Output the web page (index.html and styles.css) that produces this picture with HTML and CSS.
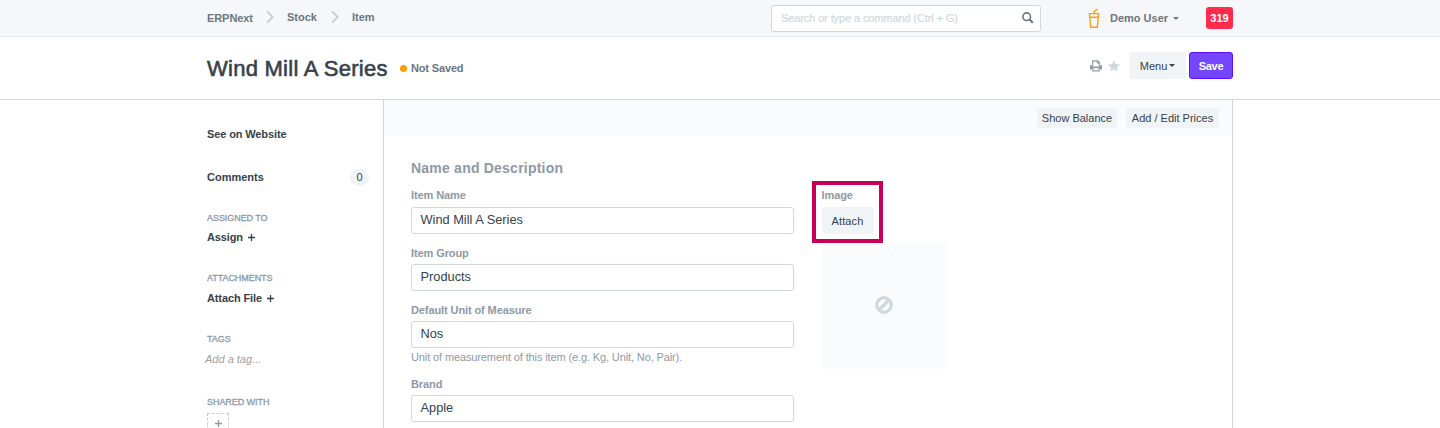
FILE: index.html
```html
<!DOCTYPE html>
<html lang="en">
<head>
<meta charset="utf-8">
<title>Wind Mill A Series</title>
<link rel="stylesheet" href="styles.css">
</head>
<body>
<header class="navbar">
  <div class="container navbar-row">
    <nav class="breadcrumbs">
      <a class="crumb crumb-home">ERPNext</a>
      <svg class="chevron" viewBox="0 0 8 14"><path d="M1.2 1.3 6.6 7l-5.4 5.7"/></svg>
      <a class="crumb crumb-stock">Stock</a>
      <svg class="chevron" viewBox="0 0 8 14"><path d="M1.2 1.3 6.6 7l-5.4 5.7"/></svg>
      <a class="crumb crumb-item">Item</a>
    </nav>
    <div class="search">
      <span class="search-text">Search or type a command (Ctrl + G)</span>
      <svg class="search-icon" viewBox="0 0 12 12"><circle cx="4.7" cy="4.7" r="3.8"/><path d="m7.6 7.6 3.2 3.2" class="handle"/></svg>
    </div>
    <div class="user">
      <svg class="avatar" viewBox="0 0 12 21"><path d="M.8 5.6h10.4M1.4 5.6l1.3 13.6h6.6l1.3-13.6M2 9.2h8M6 5.5V3.4L9.8 1.2"/></svg>
      <span class="user-name">Demo User</span>
      <span class="caret caret-light"></span>
    </div>
    <span class="count">319</span>
  </div>
</header>
<div class="page-head">
  <div class="container head-row">
    <h1 class="title">Wind Mill A Series</h1>
    <span class="dot"></span>
    <span class="status">Not Saved</span>
    <div class="actions">
      <svg class="print" viewBox="0 0 12 12"><path class="outline" d="M2.7 6V.9h5L9.3 2.5V6M7.4 1v1.9h1.8"/><path d="M1.2 5h1v1.5h7.6V5h1Q12 5 12 6.2v3.3H9.8V8.3H2.2v1.2H0V6.2Q0 5 1.2 5"/><path class="outline" d="M2.7 8v2.9h6.6V8"/></svg>
      <svg class="star" viewBox="0 0 12 12"><path d="m6 .2 1.8 3.7 4.2.6-3 2.9.7 4.1L6 9.6l-3.7 1.9.7-4.1-3-2.9 4.2-.6z"/></svg>
      <button class="btn btn-menu"><span class="menu-text">Menu</span><span class="caret"></span></button>
      <button class="btn btn-primary">Save</button>
    </div>
  </div>
</div>
<div class="container page-body">
  <aside class="sidebar">
    <a class="side-link">See on Website</a>
    <div class="comments"><a class="side-link">Comments</a><span class="badge">0</span></div>
    <section class="side-group">
      <h2 class="side-title">Assigned To</h2>
      <a class="side-link">Assign <svg class="plus" viewBox="0 0 7 7"><path d="M3.5 0v7M0 3.5h7"/></svg></a>
    </section>
    <section class="side-group">
      <h2 class="side-title">Attachments</h2>
      <a class="side-link">Attach File <svg class="plus" viewBox="0 0 7 7"><path d="M3.5 0v7M0 3.5h7"/></svg></a>
    </section>
    <section class="side-group tags">
      <h2 class="side-title">Tags</h2>
      <span class="tag-input">Add a tag...</span>
    </section>
    <section class="side-group">
      <h2 class="side-title">Shared With</h2>
      <span class="share"><svg class="plus" viewBox="0 0 7 7"><path d="M3.5 0v7M0 3.5h7"/></svg></span>
    </section>
  </aside>
  <main class="main">
    <div class="toolbar">
      <button class="btn-small show-balance">Show Balance</button>
      <button class="btn-small edit-prices">Add / Edit Prices</button>
    </div>
    <div class="form">
      <h3 class="section-title">Name and Description</h3>
      <div class="columns">
        <div class="column">
          <div class="field"><label class="label">Item Name</label><div class="input">Wind Mill A Series</div></div>
          <div class="field"><label class="label">Item Group</label><div class="input">Products</div></div>
          <div class="field"><label class="label">Default Unit of Measure</label><div class="input">Nos</div><p class="help">Unit of measurement of this item (e.g. Kg, Unit, No, Pair).</p></div>
          <div class="field"><label class="label">Brand</label><div class="input">Apple</div></div>
        </div>
        <div class="image-column">
          <label class="label">Image</label>
          <button class="btn attach">Attach</button>
          <div class="preview"><svg class="ban" viewBox="0 0 18 18"><circle cx="9" cy="9" r="7.3"/><path d="M4 14 14 4"/></svg></div>
          <div class="highlight"></div>
        </div>
      </div>
    </div>
  </main>
</div>
</body>
</html>
```
FILE: styles.css
```css
* { box-sizing: border-box; }
html { overflow: hidden; }
body { margin: 0; height: 428px; overflow: hidden; background: #fff; color: #36414c; font: 11px/16px "Liberation Sans", Arial, sans-serif; }
h1, h2, h3, p { margin: 0; }
svg { display: block; flex: none; fill: none; }
button { font: inherit; color: inherit; border: 0; padding: 0; white-space: nowrap; }
.container { width: 1026px; margin-left: 207px; display: flex; }

.navbar { height: 37px; background: #f5f7fa; border-bottom: 1px solid #e4e8ed; color: #6c7680; font-weight: bold; }
.navbar-row { height: 36px; align-items: center; }
.breadcrumbs { display: flex; align-items: center; width: 564px; }
.crumb { margin-top: -2px; white-space: nowrap; }
.crumb-home { width: 59px; margin-top: 0; letter-spacing: -.08px; }
.crumb-stock { width: 43px; margin-left: 13px; }
.crumb-item { margin-left: 13px; }
.chevron { width: 8px; height: 14px; margin-top: -2px; stroke: #c3cbd5; stroke-width: 1.8; }
.crumb-stock + .chevron { margin-left: 1px; }
.search { display: flex; align-items: center; justify-content: space-between; width: 270px; height: 27px; margin-top: 1px; padding: 0 6px 0 9px; border: 1px solid #d1d8dd; border-radius: 3px; background: #fff; color: #d1d8dd; font-weight: normal; }
.search-text { margin-top: -1px; letter-spacing: -.11px; -webkit-text-stroke: .2px #d1d8dd; }
.search-icon { width: 12px; height: 12px; margin-top: -1px; stroke: #6c7680; stroke-width: 1.6; }
.handle { stroke-width: 2.1; }
.user { display: flex; align-items: center; width: 165px; padding-left: 47px; }
.avatar { width: 12px; height: 21px; stroke: #ffa00a; stroke-width: 1.4; }
.user-name { width: 63px; margin-left: 10px; }
.caret { width: 0; border: 3px solid transparent; border-top-color: #36414c; border-bottom: 0; }
.caret-light { border-top-color: #6c7680; }
.count { width: 27px; height: 22px; border-radius: 3px; background: #ff2d4b; color: #fff; line-height: 22px; text-align: center; }

.page-head { height: 63px; border-bottom: 1px solid #d1d8dd; }
.head-row { height: 62px; align-items: center; }
.title { width: 193px; margin-top: 1px; font-size: 22px; line-height: 30px; font-weight: normal; -webkit-text-stroke: .6px #36414c; letter-spacing: .26px; white-space: nowrap; }
.dot { width: 7px; height: 7px; margin-top: 1px; border-radius: 50%; background: #ff9c07; }
.status { margin: 0 0 0 4px; color: #6c7680; font-weight: bold; letter-spacing: -.15px; }
.actions { display: flex; align-items: center; margin: -5px 0 0 auto; }
.print { width: 12px; height: 12px; margin-right: 6px; fill: #8d99a6; }
.outline { fill: none; stroke: #8d99a6; stroke-width: 1.1; }
.star { width: 12px; height: 12px; margin-right: 9px; fill: #d1d8dd; }
.btn { height: 27px; border-radius: 3px; background: #f0f4f7; }
.btn-menu { display: flex; align-items: center; justify-content: center; width: 57px; margin-right: 3px; }
.menu-text { margin-right: 2px; }
.btn-primary { width: 44px; border: 1px solid #5b0eff; background: #7446ff; color: #fff; font-weight: bold; letter-spacing: -.3px; }

.page-body { height: 328px; }
.sidebar { width: 176px; padding-top: 26px; flex: none; }
.side-link { display: flex; align-items: center; height: 16px; font-weight: bold; letter-spacing: -.12px; white-space: nowrap; }
.plus { width: 7px; height: 7px; margin-left: 5px; stroke: #36414c; stroke-width: 1.3; }
.comments { display: flex; align-items: center; justify-content: space-between; height: 18px; margin-top: 26px; padding-right: 14px; }
.comments .side-link { letter-spacing: 0; }
.badge { width: 19px; height: 17px; border-radius: 9px; background: #f0f4f7; line-height: 17px; text-align: center; }
.side-group { height: 61px; }
.comments + .side-group { margin-top: 24px; height: 60px; }
.comments + .side-group .side-title { margin-bottom: 3px; }
.side-title { height: 16px; margin-bottom: 4px; color: #8d99a6; font-size: 9px; font-weight: normal; -webkit-text-stroke: .3px #8d99a6; letter-spacing: -.06px; text-transform: uppercase; white-space: nowrap; }
.side-group.tags { height: 63px; }
.tag-input { display: block; margin-left: -2px; color: #a0a0a0; font-style: italic; }
.share { display: flex; justify-content: center; width: 22px; height: 22px; padding-top: 6px; margin-top: -1px; border: 1px dashed #c5ccd3; }
.share .plus { margin: 0; stroke: #8d99a6; }

.main { width: 850px; border: solid #d1d8dd; border-width: 0 1px; }
.toolbar { display: flex; align-items: center; justify-content: flex-end; gap: 9px; height: 36px; padding-right: 13px; background: #fafbfc; }
.btn-small { height: 20px; border-radius: 2px; background: #f0f4f7; }
.show-balance { width: 80px; }
.edit-prices { width: 93px; }
.form { padding: 22px 27px 0; }
.section-title { height: 20px; margin-bottom: 10px; color: #8d99a6; font-size: 14px; line-height: 20px; letter-spacing: .22px; white-space: nowrap; }
.columns { display: flex; gap: 27.5px; }
.column { width: 383px; }
.field { margin-bottom: 12px; }
.label { display: block; height: 19px; margin-bottom: 0; color: #8d99a6; font-weight: bold; line-height: 14px; letter-spacing: -.1px; white-space: nowrap; }
.field + .field .label { height: 18px; }
.input { height: 27px; padding-left: 8.5px; border: 1px solid #d1d8dd; border-radius: 3px; font-size: 12.8px; line-height: 23px; }
.help { height: 17px; color: #8d99a6; line-height: 18px; letter-spacing: -.12px; white-space: nowrap; }
.image-column { position: relative; width: 125px; }
.attach { display: block; width: 52px; letter-spacing: .1px; }
.preview { display: flex; align-items: center; justify-content: center; width: 125px; height: 126px; margin-top: 9px; background: #fafbfc; }
.ban { width: 18px; height: 18px; margin-top: -2px; stroke: #d1d8dd; stroke-width: 3.2; }
.highlight { position: absolute; left: -9.5px; top: -7px; width: 71px; height: 62px; border: 4px solid #c70058; }
```
